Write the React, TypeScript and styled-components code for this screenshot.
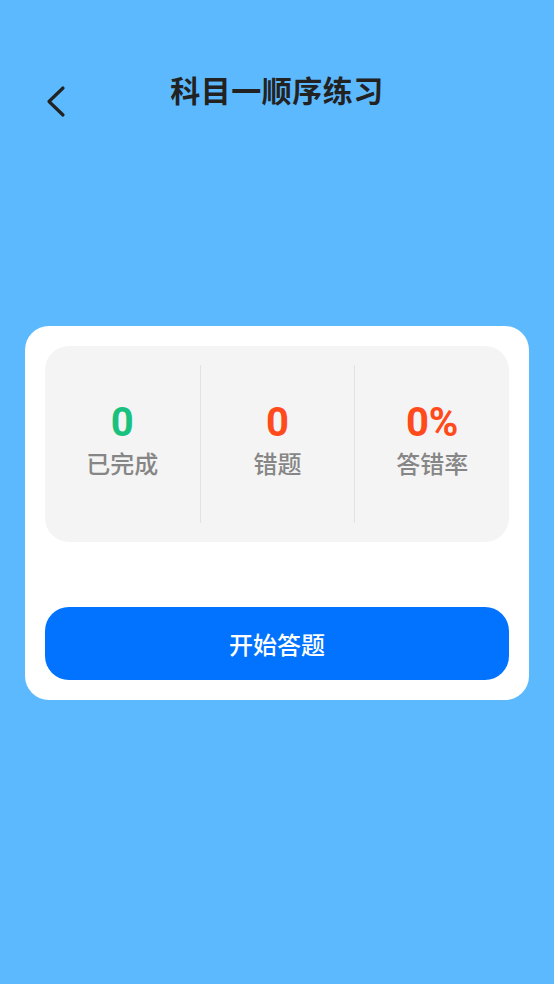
import React from "react";
import styled, { createGlobalStyle } from "styled-components";

const GlobalStyle = createGlobalStyle`
  html, body {
    margin: 0;
    padding: 0;
    background: #5cb9fe;
  }
  body {
    font-family: "Noto Sans CJK SC", "Noto Sans", sans-serif;
  }
`;

const Page = styled.div`
  width: 554px;
  height: 984px;
  background: #5cb9fe;
  display: flex;
  flex-direction: column;
  box-sizing: border-box;
`;

const Header = styled.div`
  position: relative;
  height: 60px;
  margin-top: 60px;
  display: flex;
  align-items: center;
  justify-content: center;
`;

const BackButton = styled.button`
  position: absolute;
  left: 38px;
  top: 20px;
  width: 36px;
  height: 44px;
  border: none;
  background: transparent;
  padding: 0;
  cursor: pointer;
`;

const Title = styled.h1`
  margin: 0;
  font-size: 30px;
  font-weight: 700;
  color: #222;
  letter-spacing: 0.5px;
  margin-top: -2px;
`;

const Card = styled.div`
  margin: 206px 25px 0;
  background: #fff;
  border-radius: 24px;
  padding: 20px;
  display: flex;
  flex-direction: column;
`;

const StatsPanel = styled.div`
  height: 196px;
  background: #f4f4f4;
  border-radius: 24px;
  display: grid;
  grid-template-columns: 1fr 1fr 1fr;
  align-items: center;
`;

const StatItem = styled.div<{ divider?: boolean }>`
  height: 158px;
  box-sizing: border-box;
  padding-bottom: 8px;
  display: flex;
  flex-direction: column;
  align-items: center;
  justify-content: center;
  border-left: ${({ divider }) => (divider ? "1.5px solid #e2e2e2" : "none")};
`;

const StatValue = styled.div<{ color: string }>`
  font-family: Roboto, "Noto Sans", sans-serif;
  font-size: 40px;
  font-weight: 700;
  line-height: 44px;
  color: ${({ color }) => color};
`;

const StatLabel = styled.div`
  font-size: 24px;
  font-weight: 500;
  line-height: 34px;
  color: #868686;
  margin-top: 1px;
`;

const StartButton = styled.button`
  margin-top: 65px;
  height: 73px;
  border: none;
  border-radius: 24px;
  background: #0273ff;
  color: #fff;
  font-family: "Noto Sans CJK SC", sans-serif;
  font-size: 24px;
  font-weight: 500;
  cursor: pointer;
`;

const stats = [
  { value: "0", label: "已完成", color: "#19c17f" },
  { value: "0", label: "错题", color: "#ff4a1c" },
  { value: "0%", label: "答错率", color: "#ff4a1c" },
];

export default function App() {
  return (
    <>
      <GlobalStyle />
      <Page>
        <Header>
          <BackButton aria-label="返回">
            <svg width="36" height="44" viewBox="0 0 36 44">
              <path
                d="M25 8 L11 21.5 L25 35"
                fill="none"
                stroke="#222"
                strokeWidth="3.2"
                strokeLinecap="round"
                strokeLinejoin="round"
              />
            </svg>
          </BackButton>
          <Title>科目一顺序练习</Title>
        </Header>
        <Card>
          <StatsPanel>
            {stats.map((s, i) => (
              <StatItem key={s.label} divider={i > 0}>
                <StatValue color={s.color}>{s.value}</StatValue>
                <StatLabel>{s.label}</StatLabel>
              </StatItem>
            ))}
          </StatsPanel>
          <StartButton>开始答题</StartButton>
        </Card>
      </Page>
    </>
  );
}
